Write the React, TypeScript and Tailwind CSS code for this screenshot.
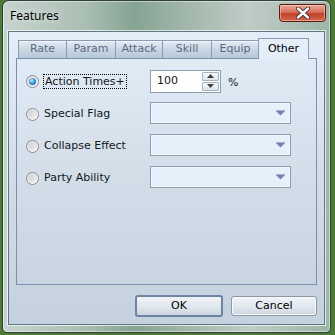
const tabs = [
  { label: "Rate", w: "w-[49px]" },
  { label: "Param", w: "w-[50px]" },
  { label: "Attack", w: "w-[48px]" },
  { label: "Skill", w: "w-[50px]" },
  { label: "Equip", w: "w-[48px]" },
];

const Radio = ({ checked }: { checked?: boolean }) => (
  <span className="w-[13px] h-[13px] shrink-0 rounded-full border border-[#8a8a8a] bg-[linear-gradient(135deg,#c9c9c9,#f6f6f6)] flex items-center justify-center shadow-[inset_0_0_0_1px_rgba(255,255,255,0.7)]">
    {checked && (
      <span className="w-[7px] h-[7px] rounded-full bg-[radial-gradient(circle_at_40%_35%,#b5ecff,#2b8fd8_55%,#0b4a8e)]" />
    )}
  </span>
);

const Combo = () => (
  <div className="w-[141px] h-[22px] border border-[#8c9cb2] bg-[#e6f0fa] shadow-[inset_0_0_0_1px_#f4f8fc] flex items-center justify-end pr-[5px]">
    <svg width="9" height="6" viewBox="0 0 9 6">
      <path d="M0 1h9L4.5 5.5z" fill="#7e80ad" />
      <path d="M0 0.5h9" stroke="#a7a9cc" strokeWidth="1" />
    </svg>
  </div>
);

const SpinBtn = ({ up }: { up?: boolean }) => (
  <div className="w-[17px] h-[9px] border border-[#a9b3c0] rounded-[1px] bg-[linear-gradient(#f7f9fb,#dde3ea)] flex items-center justify-center">
    <svg width="7" height="4" viewBox="0 0 7 4">
      <path d={up ? "M0 4h7L3.5 0z" : "M0 0h7L3.5 4z"} fill="#3b3f46" />
    </svg>
  </div>
);

export default function App() {
  return (
    <div className="w-[335px] h-[335px] overflow-hidden bg-[#4d7b33] font-['DejaVu_Sans',sans-serif] text-[11px] text-[#101820]">
      <div className="ml-[2px] w-[329px] h-[333px] rounded-t-[7px] rounded-b-[5px] border border-[#2f3f39] bg-[linear-gradient(90deg,#c7d3ce,#a9bfb3_25%,#86a393_40%,#a7bcb0_60%,#c0ccc6_75%,#9cb6a8)] flex flex-col shadow-[inset_0_0_0_1px_rgba(255,255,255,0.45)]">
        {/* title bar */}
        <div className="h-[30px] flex justify-between items-start">
          <span className="pl-[7px] pt-[6px] font-['Noto_Sans',sans-serif] text-[12px] text-black [text-shadow:0_0_6px_rgba(255,255,255,0.9)]">
            Features
          </span>
          <button className="mt-[3px] mr-[4px] w-[47px] h-[18px] rounded-b-[4px] rounded-t-[2px] border border-[#5c1d12] bg-[linear-gradient(#e9a896,#d5705a_45%,#c2412a_55%,#d3664c)] shadow-[inset_0_0_0_1px_rgba(255,220,210,0.5)] flex items-center justify-center">
            <svg width="14" height="12" viewBox="0 0 14 12">
              <path d="M2 1.5l10 9M12 1.5l-10 9" stroke="#3a2a2a" strokeWidth="4.2" strokeLinecap="round" />
              <path d="M2 1.5l10 9M12 1.5l-10 9" stroke="#ffffff" strokeWidth="2.4" strokeLinecap="round" />
            </svg>
          </button>
        </div>

        {/* client area */}
        <div className="ml-[5px] w-[317px] h-[294px] border border-[#5f7684] bg-[linear-gradient(#e4eef8,#d2dde8_50%,#c4d1de)] shadow-[0_0_0_1px_rgba(255,255,255,0.7)] flex flex-col">
          <div className="pl-[7px] pt-[6px] flex flex-col">
            {/* tabs */}
            <div className="ml-[2px] h-[20px] flex items-end">
              {tabs.map((t) => (
                <div
                  key={t.label}
                  className={`${t.w} h-[18px] -mr-px border border-b-0 border-[#8e9ab4] bg-[linear-gradient(#e3ebf4,#c9d6e3_50%,#b7c8d9)] shadow-[inset_0_1px_0_#f2f6fa] flex items-center justify-center text-[#5d6a7c] text-[11px]`}
                >
                  {t.label}
                </div>
              ))}
              <div className="w-[51px] h-[21px] -mb-px relative z-10 border border-b-0 border-[#8e9ab4] bg-[#e4eef8] flex items-center justify-center text-black text-[11px]">
                Other
              </div>
            </div>

            {/* panel */}
            <div className="w-[301px] h-[227px] border border-[#7e8fae] flex flex-col gap-[10px] pt-[11px] pl-[9px]">
              <div className="h-[22px] flex items-center">
                <div className="w-[124px] flex items-center gap-[4px]">
                  <Radio checked />
                  <span className="border border-dotted border-black px-[1px] leading-[13px]">Action Times+</span>
                </div>
                <div className="w-[71px] h-[23px] border border-[#8c9cb2] bg-white flex items-center justify-between pl-[6px] pr-[1px]">
                  <span>100</span>
                  <div className="flex flex-col gap-[1px]">
                    <SpinBtn up />
                    <SpinBtn />
                  </div>
                </div>
                <span className="ml-[7px] mt-[5px]">%</span>
              </div>
              {["Special Flag", "Collapse Effect", "Party Ability"].map((l) => (
                <div key={l} className="h-[22px] flex items-center">
                  <div className="w-[124px] flex items-center gap-[5px] pt-[3px]">
                    <Radio />
                    <span>{l}</span>
                  </div>
                  <Combo />
                </div>
              ))}
            </div>
          </div>

          {/* buttons */}
          <div className="mt-[10px] pr-[7px] flex justify-end items-center gap-[8px]">
            <button className="w-[88px] h-[22px] rounded-[3px] border-2 border-[#6f83a3] bg-[linear-gradient(#f1f4f8,#e2e8ef_50%,#cdd6e0)] text-[11px] text-black">
              OK
            </button>
            <button className="w-[86px] h-[20px] rounded-[3px] border border-[#8b96a6] bg-[linear-gradient(#f1f4f8,#e2e8ef_50%,#cdd6e0)] shadow-[inset_0_0_0_1px_#f7f9fb] text-[11px] text-black">
              Cancel
            </button>
          </div>
        </div>
      </div>
    </div>
  );
}
